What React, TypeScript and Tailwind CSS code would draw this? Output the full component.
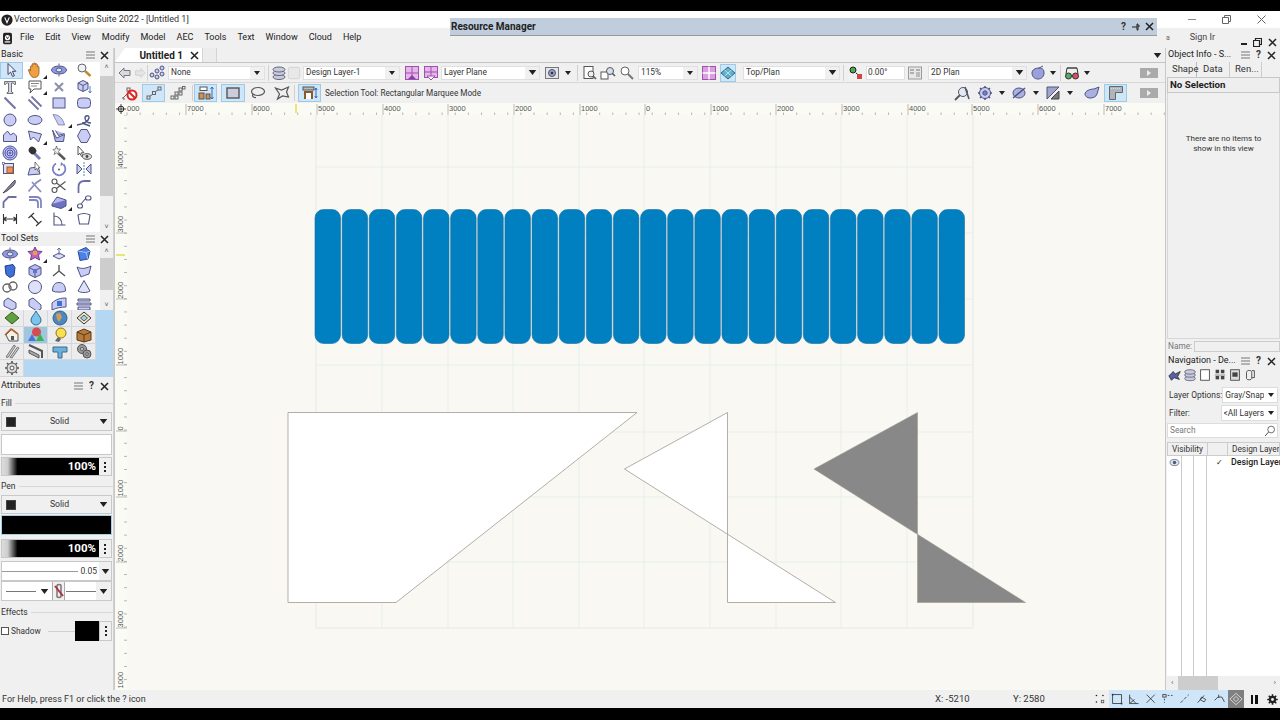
import React from "react";

const F = "#c9cdf6";
const S = "#4f5480";
const p = { fill: F, stroke: S, strokeWidth: 1 };
const n = { fill: "none", stroke: S, strokeWidth: 1.1 };

const ICONS: Record<string, React.ReactNode> = {
  arrow: <path d="M5 1.500v11l2.600-2.400 2 4.400 1.800-.8-2-4.400h3.400z" fill="#eef0ff" stroke="#3f4468" />,
  hand: <path d="M3.500 9V4.500c0-1 1.500-1 1.600 0V2.500c0-1.200 1.700-1.200 1.700 0V1.800c0-1.200 1.800-1.200 1.800 0v.7c0-1 1.700-1 1.700 0v2.500c0-.9 1.700-.9 1.700 0v5.500c0 3-1.800 5-4.500 5-2.200 0-3.300-1-4.300-3L1.500 8.500c-.5-1 .9-1.600 1.500-.7z" fill="#f0a040" stroke="#8a5a20" strokeWidth=".8" />,
  fly: <g><ellipse cx="8" cy="8" rx="7.500" ry="4" fill="#8f9ae0" stroke={S} /><ellipse cx="8" cy="8" rx="3" ry="2" fill="#dfe2fb" stroke={S} /><path d="M8 1.500v2M8 12.500v2" stroke={S} /></g>,
  zoom: <g><circle cx="6" cy="6" r="4" fill="#eef0fa" stroke="#666" /><path d="M9 9l5.500 5" stroke="#c08a30" strokeWidth="2.400" /></g>,
  T: <path d="M2.500 2.500h11v3h-1l-1-1.500H9.500v9l1.500.7v.8H5v-.8l1.500-.7V4H4.500l-1 1.500h-1z" fill="#d4d6f0" stroke="#555" strokeWidth=".8" />,
  call: <g><path d="M2 2h12v8H7l-4 4 1-4H2z" fill="#fff" stroke="#555" /><path d="M4 4.500h8M4 7h6" stroke="#888" /></g>,
  x: <path d="M4 4l8 8M12 4l-8 8" stroke="#8b8fa8" strokeWidth="2" />,
  cube3d: <g><path d="M2 4l5-2.500L12 4v6l-5 2.500L2 10z" fill={F} stroke={S} /><path d="M2 4l5 2.500L12 4M7 6.500v6" stroke={S} fill="none" /><path d="M14 7v7M12.500 12l1.500 2 1.500-2" stroke="#4c8cc0" fill="none" /></g>,
  line: <path d="M2.500 2.500l11 11" stroke="#7378a8" strokeWidth="2.200" />,
  dline: <path d="M1.500 4.500l10 10M4.500 1.500l10 10" stroke="#7378a8" strokeWidth="1.800" />,
  rect: <rect x="2" y="3" width="12" height="10" {...p} />,
  rrect: <rect x="1.500" y="3" width="13" height="10" rx="3.500" {...p} />,
  circ: <circle cx="8" cy="8" r="6" {...p} />,
  oval: <ellipse cx="8" cy="8" rx="7" ry="4.500" {...p} />,
  arc: <path d="M2 2.500c6 0 10 4 11.500 10.500L7.500 13z" {...p} strokeWidth=".6" />,
  free: <path d="M1 13c6-1 11-3 12-7 .5-3-4-3-4 0 0 3 3 5 6 5M6 11l8 3" {...n} strokeWidth="1.400" />,
  poly: <path d="M1.500 13.500V7l4-4 3 4 3-2 3 3v5.500z" {...p} />,
  pline: <path d="M1.500 3l13 3-3 8-5-5-3 3z" {...p} />,
  dpoly: <path d="M1.500 2l4 8 8-3.500-1 7-8 0zM4.500 2.500l3 5 6-2" fill="#b3b6ef" stroke={S} />,
  hex: <path d="M5 1.500h6l3.500 6.500-3.500 6.500H5L1.500 8z" {...p} />,
  spiral: <g fill="none" stroke="#4a4fa0"><circle cx="8" cy="8" r="7" fill="#c4c8f5" /><circle cx="8" cy="8" r="5" /><circle cx="8" cy="8" r="3" /><circle cx="8" cy="8" r="1" /></g>,
  drop: <g><path d="M7 8l6 6" stroke="#7a80b8" strokeWidth="3" /><ellipse cx="5.500" cy="5.500" rx="4" ry="3.500" fill="#333" transform="rotate(45 5.500 5.500)" /></g>,
  wand: <g><path d="M7 8l7 6.500" stroke="#555" strokeWidth="2.400" /><path d="M5.500 1l1 3 3 0-2 2.500 1 3-3-1.500L3 9.500l1-3L2 4.500l2.500-.5z" fill="#eee" stroke="#555" strokeWidth=".7" /></g>,
  arroweye: <g><path d="M2 1v9l2-1.800 1.500 3.300 1.400-.6-1.500-3.200H8z" fill="#fff" stroke="#555" /><ellipse cx="11" cy="11.500" rx="4.500" ry="2.800" fill="#ddd" stroke="#555" /><circle cx="11" cy="11.500" r="1.400" fill="#444" /></g>,
  move: <g><rect x="1.500" y="2.500" width="10" height="10" fill="#dfe1fa" stroke={S} /><rect x="5" y="6" width="6" height="6" fill="#e6945a" stroke="#9a5a30" /><rect x="0.500" y="1.500" width="2" height="2" fill="#fff" stroke={S} strokeWidth=".6" /></g>,
  reshape: <g><path d="M1 14l2-7 8-1 2 7z" {...p} /><path d="M8 1v8l1.800-1.500 1.400 3 1.200-.6-1.400-3H13z" fill="#fff" stroke="#555" strokeWidth=".8" /></g>,
  rotate: <g><path d="M12.500 3.500A6.300 6.300 0 1 1 5 2.500" fill="none" stroke="#7b80c8" strokeWidth="1.800" /><path d="M10 1l3 2.500-3.500 1.500z" fill="#7b80c8" /><circle cx="8" cy="8.500" r="1" fill={S} /></g>,
  mirror: <g><path d="M1 3l5 5-5 5zM15 3l-5 5 5 5z" fill={F} stroke={S} /><path d="M8 1v14" stroke="#4c8cc0" strokeDasharray="2 1" /></g>,
  knife: <g><path d="M1 15l9-10 3-3c1 2 0 4-2 6L5 13z" fill="#889" stroke="#334" strokeWidth=".8" /></g>,
  trim: <path d="M1.500 13.500L9 5l5-3.500M5 4l9 10" stroke="#8b90bc" strokeWidth="1.800" fill="none" />,
  scis: <g fill="none" stroke="#555" strokeWidth="1.100"><circle cx="3.500" cy="3.500" r="2.500" /><circle cx="3.500" cy="12" r="2.500" /><path d="M5.500 5l9 7M5.500 10.500l9-7" /></g>,
  fillet: <path d="M2.500 15V9c0-4 2-6 6-6h6" {...n} stroke="#6a6fa0" strokeWidth="1.800" />,
  chamf: <path d="M1.500 14V8l5-5h8" {...n} stroke="#6a6fa0" strokeWidth="1.800" />,
  offset: <path d="M2 3h7c3 0 5 2 5 5v6M2 6h6c2 0 3 1 3 3v5" fill="none" stroke="#8085c0" strokeWidth="1.800" />,
  slab: <g><path d="M1 10l5-7 9 3-5 6z" fill="#b8bbf2" stroke={S} /><path d="M1 10v2l9 2.500 5-2.500v-6" fill="#6e72c4" stroke={S} /></g>,
  conn: <g fill="none" stroke={S} strokeWidth="1.100"><rect x="1.500" y="10" width="5" height="4" rx="2" /><rect x="9.500" y="2" width="5.500" height="4" rx="2" /><path d="M5 10l5-6" /></g>,
  dim: <path d="M1.500 3v10M14.500 3v10M1.500 8h13M1.500 8l3-2M1.500 8l3 2M14.500 8l-3-2M14.500 8l-3 2" {...n} stroke="#333" />,
  ddim: <path d="M1.500 7L7 2M9 15l5.500-5M4 4.500l7.500 8" {...n} stroke="#333" />,
  ang: <path d="M3 1.500V14h11.500M3 5c5 0 8 4 8 9" {...n} />,
  adim: <path d="M2 4c4-2 8-2 12 0l-1.500 9H3.500zM2 4l1.500 9" {...n} />,
  star: <g><path d="M8 1l2 4 5 .5-3.500 3.500 1 5L8 11.500 3.500 14l1-5L1 5.500 6 5z" fill="#c060c8" stroke="#704088" /><rect x="6" y="5" width="4" height="4" fill="#e8a040" /></g>,
  iso: <g><path d="M2 10l6-3 6 3-6 3z" fill="#dfe1fa" stroke={S} /><path d="M8 9V2M6 4l2-2 2 2" stroke="#6a6fa0" fill="none" /></g>,
  blcube: <g><path d="M2 5l8-3.500 4 3.500-2 8-8 1.500z" fill="#4a80e8" stroke="#2c4a90" /><path d="M2 5l8 1.500 4-1.500M10 6.500l2 6.500" stroke="#a9c3f5" fill="none" /></g>,
  cyl: <path d="M3 3l8-1.500 2 3-1 8-4 2-4-3z" fill="#3f70d8" stroke="#223f88" />,
  cube: <g><path d="M2 4.500L8 1.500l6 3v7l-6 3-6-3z" fill="#b7bdf0" stroke={S} /><path d="M2 4.500l6 3 6-3M8 7.500v7" stroke={S} fill="none" /><rect x="6" y="6" width="4" height="4" fill="#6a70c8" /></g>,
  axes: <path d="M8 8V2M8 8l-6 5M8 8l6 5" stroke="#555" strokeWidth="1.400" fill="none" />,
  surf: <path d="M1 4c4 2 8 2 14-1l-2 8c-3 1-6 2-8 3z" {...p} />,
  rings: <g fill="none" stroke="#666" strokeWidth="1.400"><circle cx="5" cy="9" r="4" /><circle cx="11" cy="7" r="4" /></g>,
  sph: <circle cx="8" cy="8" r="6.500" fill="#dfe1fb" stroke={S} />,
  dome: <path d="M1.500 12C1.500 6 4 3.500 8 3.500s6.500 2.500 6.500 8.500c-3 1.500-10 1.500-13 0z" {...p} />,
  cone: <path d="M8 1.500L14 12c-3 2-9 2-12 0z" fill="#dfe1fb" stroke={S} />,
  chm: <path d="M2 5l4-3 8 5v5l-4 2-8-4z" {...p} />,
  wedge: <path d="M2 4l4-2 8 7v4l-4 2-8-5z" {...p} />,
  tube: <g><path d="M1 7c4-4 9-5 14-5v9c-5 0-10 1-14 3z" {...p} /><rect x="6" y="5" width="5" height="5" fill="#3f70d8" /></g>,
  ribs: <path d="M2 3h12v2H2zM1 7h14v2H1zM2 11h12v3H2z" {...p} />,
  g1: <path d="M1 8l7-6 7 6-7 6z" fill="#5fa040" stroke="#2f5a20" />,
  g2: <path d="M8 1c2 4 5 6 5 9a5 5 0 0 1-10 0c0-3 3-5 5-9z" fill="#7cc4ee" stroke="#2d6a90" />,
  g3: <g><circle cx="8" cy="8" r="7" fill="#4a88c4" stroke="#33608c" /><path d="M4 4l4-1 2 4-3 5-2-3z" fill="#d89a50" /></g>,
  g4: <g><path d="M8 2l7 6-7 6-7-6z" fill="#f5ecd0" stroke="#333" /><path d="M8 5l3.500 3L8 11 4.500 8z" fill="#a0d0e0" stroke="#555" /></g>,
  house: <g><path d="M2 8l6-6 6 5v7H5z" fill="#f4f0e8" stroke="#555" /><path d="M1 8l6-6 7 5" fill="none" stroke="#b06a30" strokeWidth="1.600" /><rect x="7" y="9" width="3" height="4" fill="#555" /></g>,
  shapes: <g><circle cx="8.500" cy="5" r="4.500" fill="#d64a50" /><path d="M4 7l4 7H0z" fill="#4a72d8" /><path d="M12 6l4 8H8z" fill="#3fb050" /></g>,
  bulb: <g><circle cx="9" cy="6" r="5" fill="#f8e050" stroke="#8a7a20" /><path d="M3 14l3-4 3 2-2 3z" fill="#666" /></g>,
  box: <g><path d="M1 5l7-3 7 3v8l-7 2-7-2z" fill="#b57a3a" stroke="#5a3a18" /><path d="M1 5l7 3 7-3M8 8v7" stroke="#5a3a18" fill="none" /></g>,
  pens: <path d="M2 14L10 2l1.500 1L4 14.500zM6 14.500L13.500 4 15 5 8 15z" fill="#ccc" stroke="#777" />,
  beam: <g><path d="M1 2l13 6v7" fill="none" stroke="#555" strokeWidth="2" /><path d="M1 7l10 5v3L1 10z" fill="#aaa" stroke="#555" /></g>,
  pipe: <path d="M1 4h14v5h-5v6H6V9H1z" fill="#6cb0dc" stroke="#3a6a90" />,
  gears: <g fill="#999" stroke="#555"><circle cx="6" cy="6" r="4.500" /><circle cx="11" cy="11" r="4" /><circle cx="6" cy="6" r="1.500" fill="#eee" /><circle cx="11" cy="11" r="1.300" fill="#eee" /></g>,
  cog: <g><circle cx="8" cy="8" r="5" fill="#ddd" stroke="#555" /><circle cx="8" cy="8" r="2" fill="#f4f4f4" stroke="#555" /><path d="M8 1v2M8 13v2M1 8h2M13 8h2M3 3l1.500 1.500M13 3l-1.500 1.500M3 13l1.500-1.500M13 13l-1.500-1.500" stroke="#555" strokeWidth="1.600" /></g>,
  back: <path d="M2 8l5-5v2.500h6v5H7V13z" fill="#d8dae0" stroke="#777" />,
  fwd: <path d="M14 8L9 3v2.500H3v5h6V13z" fill="#e4e5e8" stroke="#ccc" />,
  classes: <g><circle cx="3" cy="10" r="2" {...p} /><circle cx="8" cy="6" r="2" {...p} /><circle cx="13" cy="3" r="2" {...p} /><circle cx="8" cy="12" r="2" {...p} /><circle cx="13" cy="9" r="2" {...p} /></g>,
  layers: <g stroke="#667" fill="#c8cadf"><ellipse cx="8" cy="12" rx="6" ry="2.500" /><ellipse cx="8" cy="8" rx="6" ry="2.500" /><ellipse cx="8" cy="4.500" rx="6" ry="2.500" /></g>,
  blank: <rect x="1.500" y="1.500" width="13" height="13" rx="2" fill="#e8e8e8" stroke="#d0d0d0" />,
  pg1: <g><rect x="1.500" y="1.500" width="13" height="13" fill="#e6b6e8" stroke="#a050b0" /><path d="M8 1.500v13M1.500 8h13" stroke="#a050b0" /><path d="M4 14l4-4 4 4z" fill="#8a40a8" /></g>,
  pg2: <g><rect x="1.500" y="1.500" width="13" height="11" fill="#e6b6e8" stroke="#a050b0" /><path d="M8 1.500v11M1.500 7h13" stroke="#a050b0" /><path d="M4 11l4 4 4-4z" fill="#fff" stroke="#a050b0" /></g>,
  pg3: <g><rect x="1.500" y="1.500" width="13" height="13" fill="#d8a0dc" stroke="#a050b0" /><path d="M8 1.500v13M1.500 8h13" stroke="#fff" strokeWidth="1.400" /></g>,
  eyebox: <g><rect x="1.500" y="2.500" width="13" height="11" fill="#e4e5ef" stroke="#777" /><circle cx="8" cy="8" r="3.500" fill="#9a9ed0" stroke="#555" /><circle cx="8" cy="8" r="1.300" fill="#333" /></g>,
  zpage: <g><rect x="2" y="1.500" width="9" height="12" fill="#fff" stroke="#555" /><circle cx="9" cy="9" r="3" fill="#eee" stroke="#555" /><path d="M11 11l3 3" stroke="#555" strokeWidth="1.600" /></g>,
  zsel: <g><rect x="1" y="7" width="7" height="7" fill="#fff" stroke="#555" /><circle cx="10" cy="6" r="3.500" fill="#d8e0f0" stroke="#555" /><path d="M12.500 8.500l2.500 2.500" stroke="#555" strokeWidth="1.600" /></g>,
  zmag: <g><circle cx="6" cy="6" r="4" fill="#fff" stroke="#666" /><path d="M9 9l5 5" stroke="#777" strokeWidth="2" /></g>,
  iso2: <g><path d="M8 2L15 8l-7 6L1 8z" fill="#62b0c8" stroke="#2a6a88" /><path d="M4.500 5l7 6M11.500 5l-7 6" stroke="#cfeef8" strokeWidth=".8" /></g>,
  rot: <g><circle cx="5" cy="5" r="3" fill="#4caa50" stroke="#222" /><path d="M8 8l6 5" stroke="#222" /><rect x="9" y="9" width="5" height="5" fill="#c44" /></g>,
  cam: <g><rect x="1.500" y="2" width="13" height="12" fill="#e8e8e8" stroke="#999" /><path d="M3 5h4M3 8h4M9 5h4" stroke="#777" /><rect x="9" y="7" width="4" height="5" fill="#bbb" /></g>,
  pot: <g><path d="M2 8c0-3 3-5 7-5s5 2 5 5-2 6-6 6-6-3-6-6z" fill="#9aa0dc" stroke={S} /><path d="M9 3l4-2" stroke={S} /></g>,
  glass: <g><path d="M3 3h10" stroke="#333" strokeWidth="1.400" /><path d="M3 3L2 9M13 3l1 6" stroke="#333" /><circle cx="4.500" cy="11" r="3" fill="#4fb060" stroke="#333" /><circle cx="11.500" cy="11" r="3" fill="#d85060" stroke="#333" /></g>,
  no: <g><path d="M1 13l5-5M3 14h-2v-2" stroke="#666" fill="none" /><rect x="5" y="3" width="3" height="3" fill="none" stroke="#666" /><circle cx="10" cy="10" r="4.500" fill="#fff" stroke="#d22" strokeWidth="2" /><path d="M7 7l6 6" stroke="#d22" strokeWidth="2" /></g>,
  one: <g fill="none" stroke="#666"><rect x="1" y="11" width="3" height="3" /><rect x="6.500" y="6.500" width="3" height="3" /><rect x="12" y="2" width="3" height="3" /><path d="M4 11l2.500-1.500M9.500 6.500L12 5" /></g>,
  many: <g fill="none" stroke="#666"><rect x="1" y="11" width="3" height="3" /><rect x="5" y="7" width="3" height="3" /><rect x="9" y="3" width="3" height="3" /><rect x="5" y="11" width="3" height="3" /><rect x="9" y="7" width="3" height="3" /><rect x="12.500" y="1.500" width="2.500" height="2.500" /></g>,
  snapm: <g><rect x="1" y="8" width="5" height="6" fill="#d09050" stroke="#555" /><rect x="2" y="2" width="7" height="3.500" fill="#fff" stroke="#555" /><rect x="8" y="9" width="4" height="5" fill="#d09050" stroke="#555" /><path d="M14 2v12M12.500 4L14 2l1.500 2M12.500 12l1.500 2 1.500-2" stroke="#3a6ac0" fill="none" /></g>,
  marq: <rect x="2" y="3" width="12" height="10" fill="#ccd" stroke="#555" strokeWidth="1.400" />,
  lasso: <g fill="none" stroke="#555" strokeWidth="1.200"><ellipse cx="8" cy="6.500" rx="6.500" ry="4" /><path d="M3 9c-1 2 0 4 3 3.500" /></g>,
  polyl: <path d="M1.500 3l6 2 7-3-2 5 2 5-6-1-5 3 2-5z" fill="none" stroke="#555" strokeWidth="1.200" />,
  bench: <g><rect x="1" y="2" width="11" height="3" fill="#bbb" stroke="#555" /><path d="M3 14V7h7v7" fill="#fff" stroke="#8a5a2a" strokeWidth="2" /><path d="M14 3v10M12.800 5L14 3l1.200 2M12.800 11l1.200 2 1.200-2" stroke="#3a6ac0" fill="none" /></g>,
  tool: <g><path d="M1 15l5-5" stroke="#555" strokeWidth="1.800" /><circle cx="9" cy="7" r="4.500" fill="#e4e8f4" stroke="#556" /><path d="M11 2l4 12" stroke="#556" strokeWidth="1.600" /></g>,
  gear2: <g><circle cx="8" cy="8" r="5.500" fill="#c8ccf0" stroke={S} /><circle cx="8" cy="8" r="2.200" fill="#7a80c8" stroke={S} /><path d="M8 1v2M8 13v2M1 8h2M13 8h2M3 3l1.500 1.500M13 3l-1.500 1.500M3 13l1.500-1.500M13 13l-1.500-1.500" stroke={S} strokeWidth="1.500" /></g>,
  plane: <g><ellipse cx="8" cy="8" rx="6" ry="5" fill="#aab0e0" stroke={S} /><path d="M2 13L14 3" stroke={S} strokeWidth="1.500" /></g>,
  half: <g><path d="M2 2h12L2 14z" fill="#a0a4c8" stroke={S} /><path d="M14 6v8H6z" fill="#777" stroke="#444" /></g>,
  pot2: <g><path d="M1 9c0-3 5-5 9-5l5-2-2 7c-1 3-4 4-7 4s-5-2-5-4z" fill="#aab0e0" stroke={S} /></g>,
  sq: <g><path d="M1.500 1.500h13v6h-7v7h-6z" fill="#aeb4bc" stroke="#666" /><path d="M3 3.500h10" stroke="#ddd" strokeDasharray="1 1" /></g>,
  eye: <g><ellipse cx="8" cy="8" rx="6.500" ry="4.500" fill="#dce4f0" stroke="#556" /><circle cx="8" cy="8" r="2.500" fill="#4f5a80" /></g>,
  pgs: <g><rect x="3" y="2" width="10" height="12" fill="#fff" stroke="#444" /></g>,
  nav1: <path d="M1 9l5-5 2 3 6-3-3 6 2 3-6-2-3 3z" fill="#5a60a8" stroke="#333" />,
  nav2: <g fill="#444"><rect x="3" y="2" width="4" height="4" /><rect x="9" y="2" width="4" height="4" /><rect x="3" y="9" width="4" height="4" /><rect x="9" y="9" width="4" height="4" /><path d="M2 8h12" stroke="#888" /></g>,
  nav3: <g><rect x="3" y="2" width="10" height="12" fill="#ddd" stroke="#444" /><rect x="5" y="5" width="6" height="5" fill="#444" /></g>,
  nav4: <g fill="none" stroke="#444"><path d="M4 5c0-3 6-3 6 0v7c0 2-6 2-6 0z" /><path d="M10 3h3v8h-3" /></g>,
  search: <g><circle cx="9.500" cy="6" r="4.500" fill="none" stroke="#444" /><path d="M6 9.500l-4.500 5" stroke="#444" strokeWidth="1.300" /></g>,
  s1: <g fill="#222"><circle cx="3" cy="3" r="1" /><circle cx="11" cy="3" r="1" /><circle cx="3" cy="11" r="1" /><rect x="9" y="9" width="3" height="3" fill="none" stroke="#555" /></g>,
  s2: <g><rect x="2" y="2" width="11" height="11" fill="none" stroke="#333" /><rect x="1" y="1" width="2" height="2" fill="#333" /><rect x="12" y="12" width="2" height="2" fill="#333" /></g>,
  s3: <path d="M2 2v11h11M2 5l8 8M2 13l6-5" fill="none" stroke="#333" />,
  s4: <path d="M2 2l10 10M12 2L2 12" fill="none" stroke="#333" />,
  s5: <g fill="#444"><rect x="1" y="2" width="4" height="3" fill="none" stroke="#333" /><path d="M3 7v2M3 11v1M7 3h2M11 3h2" stroke="#333" /></g>,
  s6: <path d="M2 12L12 2" stroke="#333" strokeDasharray="4 2" />,
  s7: <path d="M2 12L10 3M5 8l5 3 2-3-5-3z" fill="none" stroke="#333" />,
  s8: <path d="M2 9l4-4 5 0 3 6M7 2v4" fill="none" stroke="#333" />,
  s9: <g fill="none" stroke="#ddd"><path d="M8 1.500L15 8l-7 6.500L1 8z" /><path d="M8 5l3 3-3 3-3-3z" /></g>,
  cogb: <g><circle cx="8" cy="8" r="4.500" fill="#222" /><circle cx="8" cy="8" r="1.800" fill="#eee" /><path d="M8 1.500v2.500M8 12v2.500M1.500 8H4M12 8h2.500M3.400 3.400l1.800 1.800M12.600 3.400l-1.800 1.800M3.400 12.600l1.800-1.800M12.600 12.600l-1.800-1.800" stroke="#222" strokeWidth="2" /></g>,
  logo: <g><circle cx="8" cy="8" r="7.500" fill="#222" /><path d="M5 4.500l3 7 3-7" fill="none" stroke="#fff" strokeWidth="1.500" /></g>,
  doc: <g><rect x="2.500" y="1" width="11" height="14" rx="2" fill="#222" /><circle cx="8" cy="7" r="3.200" fill="#fff" /><path d="M6.500 5.500L8 8.500l1.500-3" stroke="#222" fill="none" /><rect x="4.500" y="11.500" width="7" height="1.500" fill="#fff" /></g>,
};

function I({ n: name, w = 16 }: { n: string; w?: number }) {
  return (
    <svg width={w} height={w} viewBox="0 0 16 16" className="block shrink-0">
      {ICONS[name]}
    </svg>
  );
}

const Caret = ({ big }: { big?: boolean }) => (
  <svg width={big ? 9 : 6} height={big ? 5 : 4} viewBox="0 0 6 4" className="block shrink-0">
    <path d="M0 0h6L3 4z" fill="#222" />
  </svg>
);

const Close = () => (
  <svg width="9" height="9" viewBox="0 0 9 9" className="block shrink-0">
    <path d="M1 1l7 7M8 1L1 8" stroke="#222" strokeWidth="1.500" />
  </svg>
);
const Menu3 = () => (
  <svg width="9" height="8" viewBox="0 0 9 8" className="block shrink-0">
    <path d="M0 1h9M0 4h9M0 7h9" stroke="#777" />
  </svg>
);
const Help = () => <span className="w-[7px] text-center text-[10px] font-bold leading-none text-[#333]">?</span>;

function PanelHead({ title, help, cls = "" }: { title: string; help?: boolean; cls?: string }) {
  return (
    <div className={`flex h-[14px] items-center bg-[#f0f0f0] pl-[1px] pr-[4px] text-[9px] text-[#222] ${cls}`}>
      <span className="flex-1 truncate">{title}</span>
      <div className="flex items-center gap-[5px]">
        <Menu3 />
        {help && <Help />}
        <Close />
      </div>
    </div>
  );
}

const BASIC = [
  ["arrow", "hand", "fly", "zoom"],
  ["T", "call", "x", "cube3d"],
  ["line", "dline", "rect", "rrect"],
  ["circ", "oval", "arc", "free"],
  ["poly", "pline", "dpoly", "hex"],
  ["spiral", "drop", "wand", "arroweye"],
  ["move", "reshape", "rotate", "mirror"],
  ["knife", "trim", "scis", "fillet"],
  ["chamf", "offset", "slab", "conn"],
  ["dim", "ddim", "ang", "adim"],
].flat();
const BASIC_FLY = [1, 5, 14, 17, 34];

const TOOLSET = [
  ["fly", "star", "iso", "blcube"],
  ["cyl", "cube", "axes", "surf"],
  ["rings", "sph", "dome", "cone"],
  ["chm", "wedge", "tube", "ribs"],
].flat();

const SETS = ["g1", "g2", "g3", "g4", "house", "shapes", "bulb", "box", "pens", "beam", "pipe", "gears", "cog"];

const Fly = () => (
  <svg width="4" height="4" viewBox="0 0 4 4" className="absolute bottom-0 right-0 block">
    <path d="M4 0v4H0z" fill="#222" />
  </svg>
);

function Scroll({ top, h }: { top: number; h: number }) {
  return (
    <div className="flex w-[13px] shrink-0 flex-col items-center bg-[#f0f0f0]">
      <span className="h-[10px] text-[7px] leading-[10px] text-[#555]">˄</span>
      <div className="flex w-full flex-1 flex-col">
        <div style={{ height: top }} />
        <div className="w-full bg-[#cdcdcd]" style={{ height: h }} />
      </div>
      <span className="h-[10px] text-[7px] leading-[10px] text-[#555]">˅</span>
    </div>
  );
}

function Swatch({ label }: { label: string }) {
  return (
    <div className="mx-[1px] flex h-[19px] items-center border border-[#c8c8c8] bg-[#f0f0f0] pl-[4px] pr-[3px] text-[8.700px] text-[#333]">
      <div className="h-[10px] w-[10px] border border-[#444] bg-[#222]" />
      <span className="flex-1 pl-[4px] text-center">{label}</span>
      <Caret big />
    </div>
  );
}

const Dots = () => (
  <div className="flex flex-1 flex-col items-center justify-center gap-[2px]">
    <i className="h-[2px] w-[2px] bg-[#222]" />
    <i className="h-[2px] w-[2px] bg-[#222]" />
    <i className="h-[2px] w-[2px] bg-[#222]" />
  </div>
);

function Opacity() {
  return (
    <div className="mx-[1px] flex h-[19px] border border-[#c8c8c8] bg-[#f0f0f0]">
      <div className="flex w-[97px] items-center justify-end bg-[linear-gradient(90deg,#ddd_0%,#ccc_6%,#000_16%,#000_100%)] pr-[3px] text-[11.500px] font-bold text-white">100%</div>
      <Dots />
    </div>
  );
}

const Section = ({ label, cls }: { label: string; cls: string }) => (
  <div className={`flex h-[12px] items-center gap-[3px] pl-[1px] text-[8.500px] text-[#333] ${cls}`}>
    {label}
    <div className="h-px flex-1 bg-[#d8d8d8]" />
  </div>
);

function LeftPanel() {
  return (
    <aside className="flex w-[114px] shrink-0 flex-col border-r border-[#d0d0d0] bg-[#f0f0f0]">
      <PanelHead title="Basic" />
      <div className="flex h-[170px] overflow-hidden bg-white">
        <div className="ml-[-2px] grid flex-1 grid-cols-[24.500px_24.500px_24.500px_24.500px] auto-rows-[16.500px]">
          {BASIC.map((k, i) => (
            <div key={i} className={`relative flex items-center justify-center ${i === 0 ? "ml-[2px] border border-[#a0c8e8] bg-[#cfe6f8]" : ""}`}>
              <I n={k} w={16} />
              {BASIC_FLY.includes(i) && <Fly />}
            </div>
          ))}
        </div>
        <Scroll top={4} h={120} />
      </div>
      <PanelHead title="Tool Sets" />
      <div className="flex h-[64px] overflow-hidden bg-white">
        <div className="ml-[-2px] grid flex-1 grid-cols-[24.500px_24.500px_24.500px_24.500px] auto-rows-[16.500px]">
          {TOOLSET.map((k, i) => (
            <div key={i} className="relative flex items-center justify-center">
              <I n={k} w={16} />
              {i === 1 && <Fly />}
            </div>
          ))}
        </div>
        <Scroll top={2} h={32} />
      </div>
      <div className="grid h-[67px] grid-cols-[24px_24px_24px_24px_1fr] auto-rows-[16.750px] bg-[#b5d7f2]">
        {SETS.map((k, i) => (
          <React.Fragment key={i}>
            <div className={`flex items-center justify-center border-r border-b border-[#d4d8dc] ${k === "shapes" ? "bg-[#9fc6de]" : "bg-[#ececec]"}`}>
              <I n={k} w={16} />
            </div>
            {i % 4 === 3 && <div />}
          </React.Fragment>
        ))}
      </div>
      <PanelHead title="Attributes" help cls="mt-[2px]" />
      <Section label="Fill" cls="mt-[4px]" />
      <div className="mt-[3px]"><Swatch label="Solid" /></div>
      <div className="mx-[1px] mt-[3px] h-[21px] border border-[#c8c8c8] bg-white" />
      <div className="mt-[2px]"><Opacity /></div>
      <Section label="Pen" cls="mt-[4px]" />
      <div className="mt-[3px]"><Swatch label="Solid" /></div>
      <div className="mx-[1px] mt-[1px] h-[20px] border border-[#a6cfe8] bg-black" />
      <div className="mt-[4px]"><Opacity /></div>
      <div className="mx-[1px] mt-[3px] flex h-[20px] items-center border border-[#c8c8c8] bg-white text-[8.500px] text-[#333]">
        <div className="h-px flex-1 bg-[#999]" />
        <span className="px-[2px]">0.05</span>
        <div className="flex h-full w-[12px] items-center justify-center bg-[#f0f0f0]"><Caret big /></div>
      </div>
      <div className="mx-[1px] mt-0 flex h-[20px] items-center border border-[#c8c8c8] bg-white">
        <div className="mx-[4px] h-px w-[30px] bg-[#777]" />
        <Caret big />
        <div className="ml-[3px] flex h-full w-[13px] items-center justify-center border-x border-[#aaa] bg-[#f0f0f0]">
          <svg width="10" height="16" viewBox="0 0 10 16"><path d="M3 3c0-2 4-2 4 0v10c0 2-4 2-4 0z" fill="none" stroke="#777" strokeWidth="1.500" /><path d="M1 3l8 10" stroke="#b03040" strokeWidth="2" /></svg>
        </div>
        <div className="ml-[1px] h-px w-[30px] bg-[#777]" />
        <div className="flex h-full flex-1 items-center justify-center bg-[#f0f0f0]"><Caret big /></div>
      </div>
      <Section label="Effects" cls="mt-[5px]" />
      <div className="mt-[3px] flex h-[20px] items-center text-[8.300px] text-[#333]">
        <div className="ml-[1px] h-[8px] w-[8px] border border-[#555] bg-white" />
        <span className="ml-[2px]">Shadow</span>
        <div className="ml-[7px] h-px flex-1 bg-[#d0d0d0]" />
        <div className="h-[20px] w-[24px] bg-black" />
        <div className="mr-[1px] flex h-[20px] w-[13px] border border-[#c8c8c8]"><Dots /></div>
      </div>
      <div className="flex-1" />
    </aside>
  );
}

function Drop({ w, label, big, ml = 0 }: { w: number; label: string; big?: boolean; ml?: number }) {
  return (
    <div style={{ width: w, marginLeft: ml }} className="flex h-[14px] shrink-0 items-center border border-[#e0e0e0] bg-white pl-[2px] text-[8.300px] text-[#333]">
      <span className="flex-1 truncate">{label}</span>
      <div className="flex h-full w-[14px] items-center justify-center bg-[#f0f0f0]"><Caret big={big} /></div>
    </div>
  );
}
const Gap = ({ w }: { w: number }) => <div style={{ width: w }} className="shrink-0" />;
const Sep = ({ ml = 3, mr = 3 }: { ml?: number; mr?: number }) => (
  <div style={{ marginLeft: ml, marginRight: mr }} className="h-[16px] w-px shrink-0 bg-[#d0d0d0]" />
);
const Sel = ({ k, w = 20 }: { k: string; w?: number }) => (
  <div style={{ width: w }} className="flex h-[18px] shrink-0 items-center justify-center border border-[#9ccbe8] bg-[#cfe6f8]">
    <I n={k} w={16} />
  </div>
);
const Ico = ({ k, w = 19 }: { k: string; w?: number }) => (
  <div style={{ width: w }} className="flex h-[18px] shrink-0 items-center justify-center"><I n={k} w={Math.min(w, 16)} /></div>
);
const CaretBtn = ({ w = 10 }: { w?: number }) => (
  <div style={{ width: w }} className="flex h-[14px] shrink-0 items-center justify-center"><Caret /></div>
);
const GreyBtn = () => (
  <div className="flex h-[10px] w-[18px] shrink-0 items-center justify-center bg-[#aaa]">
    <svg width="4" height="6" viewBox="0 0 4 6"><path d="M0 0l4 3-4 3z" fill="#eee" /></svg>
  </div>
);

function TopRuler() {
  const top = [[187, "7000"], [253, "6000"], [318, "5000"], [384, "4000"], [449, "3000"], [515, "2000"], [581, "1000"], [646, "0"], [712, "1000"], [777, "2000"], [843, "3000"], [909, "4000"], [973, "5000"], [1039, "6000"], [1105, "7000"]] as const;
  const ticks = Array.from({ length: 80 }, (_, i) => 127 + i * 13.13);
  return (
    <svg width="1050" height="12" viewBox="115 103 1050 12" className="block shrink-0">
      <rect x="115" y="103" width="1050" height="12" fill="#fbfbf5" />
      {ticks.map((x, i) => <line key={i} x1={x} x2={x} y1="112.500" y2="115" stroke="#999" strokeWidth=".7" />)}
      {top.map(([x, t], i) => (
        <g key={i}>
          <line x1={x - 1} x2={x - 1} y1="104" y2="115" stroke="#aaa" strokeWidth=".8" />
          <text x={x} y="110.500" fontSize="7.500" fill="#555" fontFamily="'Liberation Sans',sans-serif">{t}</text>
        </g>
      ))}
      <text x="127" y="110.500" fontSize="7.500" fill="#555" fontFamily="'Liberation Sans',sans-serif">000</text>
      <rect x="295.500" y="104" width="1" height="9" fill="#d8d000" />
      <circle cx="121" cy="109" r="2.800" fill="none" stroke="#222" />
      <path d="M121 104v10M116 109h10" stroke="#222" strokeWidth=".8" />
    </svg>
  );
}

function LeftRuler() {
  const left = [[168, 168, "4000"], [233, 233, "3000"], [299, 299, "2000"], [365, 365, "1000"], [431, 431, "0"], [497, 497, "1000"], [562, 562, "2000"], [628, 628, "3000"], [694, 689, "1000"]] as const;
  const ticks = Array.from({ length: 46 }, (_, i) => 115 + i * 13.13);
  return (
    <svg width="12" height="575" viewBox="115 115 12 575" className="block shrink-0">
      <rect x="115" y="115" width="12" height="575" fill="#fbfbf5" />
      {ticks.map((y, i) => <line key={i} y1={y} y2={y} x1="124" x2="127" stroke="#999" strokeWidth=".7" />)}
      {left.map(([y, ty, t], i) => (
        <g key={i}>
          <line y1={y} y2={y} x1="116" x2="127" stroke="#aaa" strokeWidth=".8" />
          <text transform={`translate(122.500 ${ty - 0.5}) rotate(-90)`} fontSize="7.500" fill="#555" fontFamily="'Liberation Sans',sans-serif">{t}</text>
        </g>
      ))}
      <rect x="116" y="254.500" width="9" height="1" fill="#d8d000" />
    </svg>
  );
}

function Canvas() {
  const vs = [382, 448, 513, 579, 644, 710, 776, 841, 907];
  const hs = [167, 233, 299, 365, 432, 497, 562];
  const bars = Array.from({ length: 24 }, (_, i) => 315 + i * 27.13);
  return (
    <svg width="1038" height="575" viewBox="127 115 1038 575" className="block flex-1">
      <rect x="127" y="115" width="1038" height="575" fill="#f9f8f2" />
      {vs.map((x) => <line key={x} x1={x} x2={x} y1="115" y2="628" stroke="#e2eeec" strokeWidth=".8" />)}
      {hs.map((y) => <line key={y} x1="316" x2="973" y1={y} y2={y} stroke="#e2eeec" strokeWidth=".8" />)}
      <path d="M316 115V628H973V115" fill="none" stroke="#e4eae7" strokeWidth="1" />
      {bars.map((x) => (
        <rect key={x} x={x} y="209.500" width="25.500" height="134" rx="8.500" fill="#0080c0" stroke="#1a6b9c" strokeWidth=".6" />
      ))}
      <path d="M288 412.500H637L396 602.500H288z" fill="#fff" stroke="#aaa69e" strokeWidth=".9" />
      <path d="M727.500 412.500L624.500 469L835.500 602.500H727.500z" fill="#fff" fillRule="evenodd" stroke="#aaa69e" strokeWidth=".9" />
      <path d="M917.500 412.500L814 469L1025.500 602.500H917.500z" fill="#888" fillRule="evenodd" stroke="#9a9890" strokeWidth=".6" />
    </svg>
  );
}

function Center() {
  return (
    <main className="flex w-[1052px] shrink-0 flex-col border-x border-[#c8c8c8]">
      <div className="flex h-[15px] items-stretch border-b border-[#c4c4c4] bg-[#f0f0f0]">
        <div className="flex w-[87px] items-center justify-end gap-[7px] bg-white pr-[3px] text-[10px] font-bold text-[#222] [clip-path:polygon(10px_0,100%_0,100%_100%,0_100%)]">
          <span>Untitled 1</span><Close />
        </div>
        <div className="w-[15px] border-x border-[#d4d4d4] bg-[#ececec]" />
        <div className="flex flex-1 items-center justify-end pr-[3px]"><Caret big /></div>
      </div>
      <div className="flex h-[20px] items-center border-b border-[#d8d8d8] bg-[#f0f0f0] pl-[1px]">
        <Ico k="back" w={17} />
        <Ico k="fwd" w={14} />
        <Sep ml={0} mr={1} />
        <Ico k="classes" w={16} />
        <Gap w={3} />
        <Drop w={97} label="None" />
        <Sep ml={3} mr={2} />
        <Ico k="layers" w={16} />
        <Ico k="blank" w={14} />
        <Gap w={2} />
        <Drop w={97} label="Design Layer-1" />
        <Gap w={3} />
        <Ico k="pg1" w={18} /><Ico k="pg2" w={20} />
        <Drop w={99} label="Layer Plane" big />
        <Gap w={3} />
        <Ico k="eyebox" w={18} /><CaretBtn w={14} />
        <Sep ml={2} mr={3} />
        <Ico k="zpage" w={18} /><Ico k="zsel" w={18} /><Ico k="zmag" w={19} />
        <Drop w={60} label="115%" ml={2} />
        <Gap w={1} />
        <Ico k="pg3" w={19} />
        <Gap w={2} />
        <Sel k="iso2" w={16} />
        <Gap w={7} />
        <Drop w={97} label="Top/Plan" big />
        <Sep ml={3} mr={3} />
        <Ico k="rot" w={18} />
        <Gap w={1} />
        <div className="flex h-[14px] w-[39px] shrink-0 items-center border border-[#e0e0e0] bg-white pl-[1px] text-[8.300px] text-[#333]">0.00°</div>
        <Gap w={1} />
        <Ico k="cam" w={18} />
        <Gap w={4} />
        <Drop w={99} label="2D Plan" big />
        <Gap w={2} />
        <Ico k="pot" w={18} /><CaretBtn w={12} />
        <Sep ml={1} mr={1} />
        <Ico k="glass" w={19} /><CaretBtn w={12} />
        <div className="flex-1" />
        <GreyBtn />
        <Gap w={7} />
      </div>
      <div className="flex h-[20px] items-center bg-[#f0f0f0] pl-[6px]">
        <Ico k="no" w={18} />
        <Gap w={3} />
        <Sel k="one" w={23} />
        <Gap w={2} />
        <Ico k="many" w={22} />
        <Sep ml={3} mr={1} />
        <Sel k="snapm" w={23} />
        <Gap w={4} />
        <Sel k="marq" w={24} />
        <Ico k="lasso" w={26} />
        <Ico k="polyl" w={22} />
        <Sep ml={1} mr={3} />
        <Sel k="bench" w={23} />
        <span className="ml-[4px] mt-[1px] text-[8.200px] text-[#333]">Selection Tool: Rectangular Marquee Mode</span>
        <div className="flex-1" />
        <Ico k="tool" w={26} />
        <Ico k="gear2" w={19} /><CaretBtn w={16} />
        <Ico k="plane" w={18} /><CaretBtn w={16} />
        <Ico k="half" w={18} /><CaretBtn w={16} />
        <Gap w={2} />
        <Ico k="pot2" w={24} />
        <Sel k="sq" w={23} />
        <Gap w={13} />
        <GreyBtn />
        <Gap w={7} />
      </div>
      <TopRuler />
      <div className="flex h-[575px] overflow-hidden">
        <LeftRuler />
        <Canvas />
      </div>
    </main>
  );
}

function RightPanel() {
  return (
    <aside className="flex min-w-0 flex-1 flex-col bg-[#f0f0f0] pl-[1px]">
      <PanelHead title="Object Info - S..." help />
      <div className="flex h-[15px] items-center pl-[5px] text-[9.500px] text-[#333]">
        <span className="w-[25px] border-r border-[#bbb]">Shape</span>
        <span className="w-[33px] border-r border-[#ccc] pl-[6px]">Data</span>
        <span className="border-r border-[#ccc] pl-[5px] pr-[2px]">Ren...</span>
      </div>
      <div className="flex h-[16px] items-center border border-[#c8c8c8] bg-[#eeeeee] pl-[2px] text-[9.700px] font-bold text-[#222]">No Selection</div>
      <div className="h-[246px] border border-t-0 border-[#d8d8d8] pt-[41px] text-center text-[8px] leading-[10px] text-[#333]">
        There are no items to<br />show in this view
      </div>
      <div className="flex h-[14px] items-center text-[8.300px] text-[#777]">
        <span className="w-[27px] pl-[1px]">Name:</span>
        <div className="h-[11px] flex-1 border border-[#ccc]" />
      </div>
      <PanelHead title="Navigation - De..." help cls="mt-[1px]" />
      <div className="flex h-[14px] items-center gap-[1px] pl-[1px]">
        <Ico k="nav1" w={14} />
        <Ico k="layers" w={14} />
        <Ico k="pgs" w={14} />
        <Ico k="nav2" w={14} />
        <Ico k="nav3" w={14} />
        <Ico k="nav4" w={14} />
      </div>
      <div className="mt-[5px] flex h-[16px] items-center whitespace-nowrap text-[8.400px] text-[#333]">
        <span className="w-[56px] pl-[2px]">Layer Options:</span>
        <div className="mr-[2px] flex h-[16px] flex-1 items-center border border-[#ddd] bg-white pl-[2px]"><span className="flex-1 truncate">Gray/Snap</span><span className="flex h-full w-[13px] items-center justify-center"><Caret /></span></div>
      </div>
      <div className="mt-[2px] flex h-[16px] items-center whitespace-nowrap text-[8.400px] text-[#333]">
        <span className="w-[56px] pl-[2px]">Filter:</span>
        <div className="mr-[2px] flex h-[16px] flex-1 items-center border border-[#ddd] bg-white pl-[2px]"><span className="flex-1 truncate">&lt;All Layers</span><span className="flex h-full w-[13px] items-center justify-center"><Caret /></span></div>
      </div>
      <div className="mr-[2px] mt-[2px] flex h-[15px] items-center border border-[#ddd] bg-white pl-[2px] pr-[1px] text-[8.300px] text-[#777]">
        <span className="flex-1">Search</span><I n="search" w={12} />
      </div>
      <div className="mt-[4px] flex h-[14px] items-center overflow-hidden border border-[#ccc] bg-[#f0f0f0] text-[8.300px] text-[#333]">
        <span className="w-[40px] shrink-0 border-r border-[#ccc] pl-[4px] leading-[12px]">Visibility</span>
        <span className="h-full w-[20px] shrink-0 border-r border-[#ccc]" />
        <span className="whitespace-nowrap pl-[4px]">Design Layer</span>
      </div>
      <div className="flex h-[220px] overflow-hidden bg-white text-[8.800px] text-[#222]">
        <div className="flex h-full w-[15px] shrink-0 justify-center border-r border-[#ccc] pt-[1px]"><I n="eye" w={11} /></div>
        <div className="h-full w-[12px] shrink-0 border-r border-[#ccc]" />
        <div className="h-full w-[13px] shrink-0 border-r border-[#ccc]" />
        <div className="flex h-[14px] w-[24px] shrink-0 items-center justify-center text-[8px]">✓</div>
        <span className="flex h-[14px] items-center whitespace-nowrap font-medium">Design Layer</span>
      </div>
      <div className="flex h-[14px] items-center bg-[#f0f0f0] px-[4px] text-[8px] text-[#555]">
        <span>‹</span>
        <div className="ml-[5px] h-full w-[40px] bg-[#cdcdcd]" />
        <div className="flex-1" />
        <span>›</span>
      </div>
    </aside>
  );
}

function StatusBar() {
  const icons = ["s1", "s2", "s3", "s4", "s5", "s6", "s7", "s8"];
  return (
    <div className="flex h-[18px] shrink-0 items-center bg-[#f0f0f0] pl-[2px] text-[9px] text-[#333]">
      <span className="pt-[1px]">For Help, press F1 or click the ? icon</span>
      <div className="flex-1" />
      <span className="w-[78px] pt-[1px] text-[9.500px]">X: -5210</span>
      <span className="w-[79px] pt-[1px] text-[9.500px]">Y: 2580</span>
      <div className="flex h-full">
        {icons.map((k, i) => (
          <div key={k} className={`flex h-full w-[17px] items-center justify-center ${i === 0 ? "" : "bg-[#cfe6f8]"}`}><I n={k} w={13} /></div>
        ))}
        <div className="flex h-full w-[16px] items-center justify-center bg-[#808080]"><I n="s9" w={14} /></div>
        <div className="flex h-full w-[20px] items-center justify-center gap-[2px]"><i className="h-[9px] w-[2.500px] bg-[#111]" /><i className="h-[9px] w-[2.500px] bg-[#111]" /></div>
        <div className="flex h-full w-[16px] items-center justify-center"><I n="cogb" w={13} /></div>
      </div>
    </div>
  );
}

export default function App() {
  return (
    <div className="relative flex h-[720px] w-[1280px] flex-col overflow-hidden bg-black font-['Roboto','Liberation_Sans',sans-serif]">
      <div className="h-[11px] shrink-0 bg-black" />
      <div className="flex h-[17px] shrink-0 items-center bg-white pl-[1px] text-[9px] text-[#333]">
        <I n="logo" w={12} />
        <span className="ml-[1px] pt-[1px]">Vectorworks Design Suite 2022 - [Untitled 1]</span>
        <div className="flex-1" />
        <div className="flex w-[105px] items-center justify-between pl-[13px] pr-[14px] text-[#555]">
          <div className="h-px w-[8px] bg-[#888]" />
          <svg width="9" height="9" viewBox="0 0 9 9"><path d="M2.500 2.500V.5h6v6h-2M.5 2.500h6v6h-6z" fill="none" stroke="#666" /></svg>
          <svg width="9" height="9" viewBox="0 0 9 9"><path d="M.5.5l8 8M8.500.5l-8 8" stroke="#666" /></svg>
        </div>
      </div>
      <div className="flex h-[20px] shrink-0 items-center bg-[#f0f0f0] text-[9px] text-[#222]">
        <div className="ml-[1px] w-[19px]"><I n="doc" w={13} /></div>
        <div className="flex gap-[11px]">
          {["File", "Edit", "View", "Modify", "Model", "AEC", "Tools", "Text", "Window", "Cloud", "Help"].map((m) => (
            <span key={m}>{m}</span>
          ))}
        </div>
        <div className="flex-1" />
        <span className="mr-[20px] text-[7px] text-[#666]">a</span>
        <span className="mr-[26px] text-[#444]">Sign Ir</span>
        <div className="mr-[3px] mt-[8px] flex items-center gap-[6px]">
          <div className="mt-[4px] h-[2px] w-[6px] bg-[#222]" />
          <svg width="9" height="9" viewBox="0 0 9 9"><path d="M2.500 2.500V.5h6v6h-2M.5 2.500h6v6h-6z" fill="none" stroke="#222" strokeWidth="1.200" /></svg>
          <Close />
        </div>
      </div>
      <div className="flex h-[642px] shrink-0">
        <LeftPanel />
        <Center />
        <RightPanel />
      </div>
      <StatusBar />
      <div className="flex-1 bg-black" />
      <div className="absolute left-[450px] top-[18px] flex h-[18px] w-[707px] items-center justify-between border-b border-[#999] bg-[#bfcddc] pl-[1px] pr-[3px] text-[10px] font-bold text-[#222]">
        <span>Resource Manager</span>
        <div className="flex items-center gap-[5px]">
          <Help />
          <svg width="8" height="8" viewBox="0 0 8 8"><path d="M0 4h5M5 1v6h1V1zM6 3h2" stroke="#222" fill="none" /></svg>
          <Close />
        </div>
      </div>
    </div>
  );
}
